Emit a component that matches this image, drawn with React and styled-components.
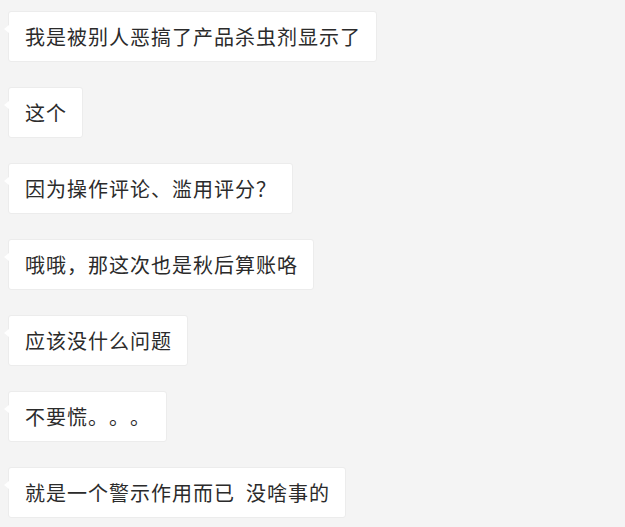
import React from 'react';
import styled, { createGlobalStyle } from 'styled-components';

const GlobalStyle = createGlobalStyle`
  html, body {
    margin: 0;
    padding: 0;
    background: #f4f4f4;
  }
  body {
    font-family: "Noto Sans CJK SC", "Noto Sans", sans-serif;
  }
`;

const Thread = styled.div`
  display: flex;
  flex-direction: column;
  align-items: flex-start;
  gap: 25px;
  padding: 11px 0 0 8px;
  min-height: 527px;
  box-sizing: border-box;
`;

const Bubble = styled.div`
  position: relative;
  background: #fff;
  border: 1px solid #ececec;
  border-radius: 3px;
  padding: 0 15px 0 16px;
  height: 51px;
  box-sizing: border-box;
  display: flex;
  align-items: center;
  font-size: 20px;
  letter-spacing: 1px;
  color: #2b2b2b;
  white-space: pre;
  text-spacing-trim: space-all;
  font-feature-settings: "halt" 0, "chws" 0;

  &::before {
    content: '';
    position: absolute;
    left: -5px;
    top: 13px;
    border-style: solid;
    border-width: 4px 5px 4px 0;
    border-color: transparent #fff transparent transparent;
  }
`;

const messages = [
  '我是被别人恶搞了产品杀虫剂显示了',
  '这个',
  '因为操作评论、滥用评分？',
  '哦哦，那这次也是秋后算账咯',
  '应该没什么问题',
  '不要慌。。。',
  '就是一个警示作用而已  没啥事的',
];

const App = () => (
  <>
    <GlobalStyle />
    <Thread>
      {messages.map((m, i) => (
        <Bubble key={i}>{m}</Bubble>
      ))}
    </Thread>
  </>
);

export default App;
